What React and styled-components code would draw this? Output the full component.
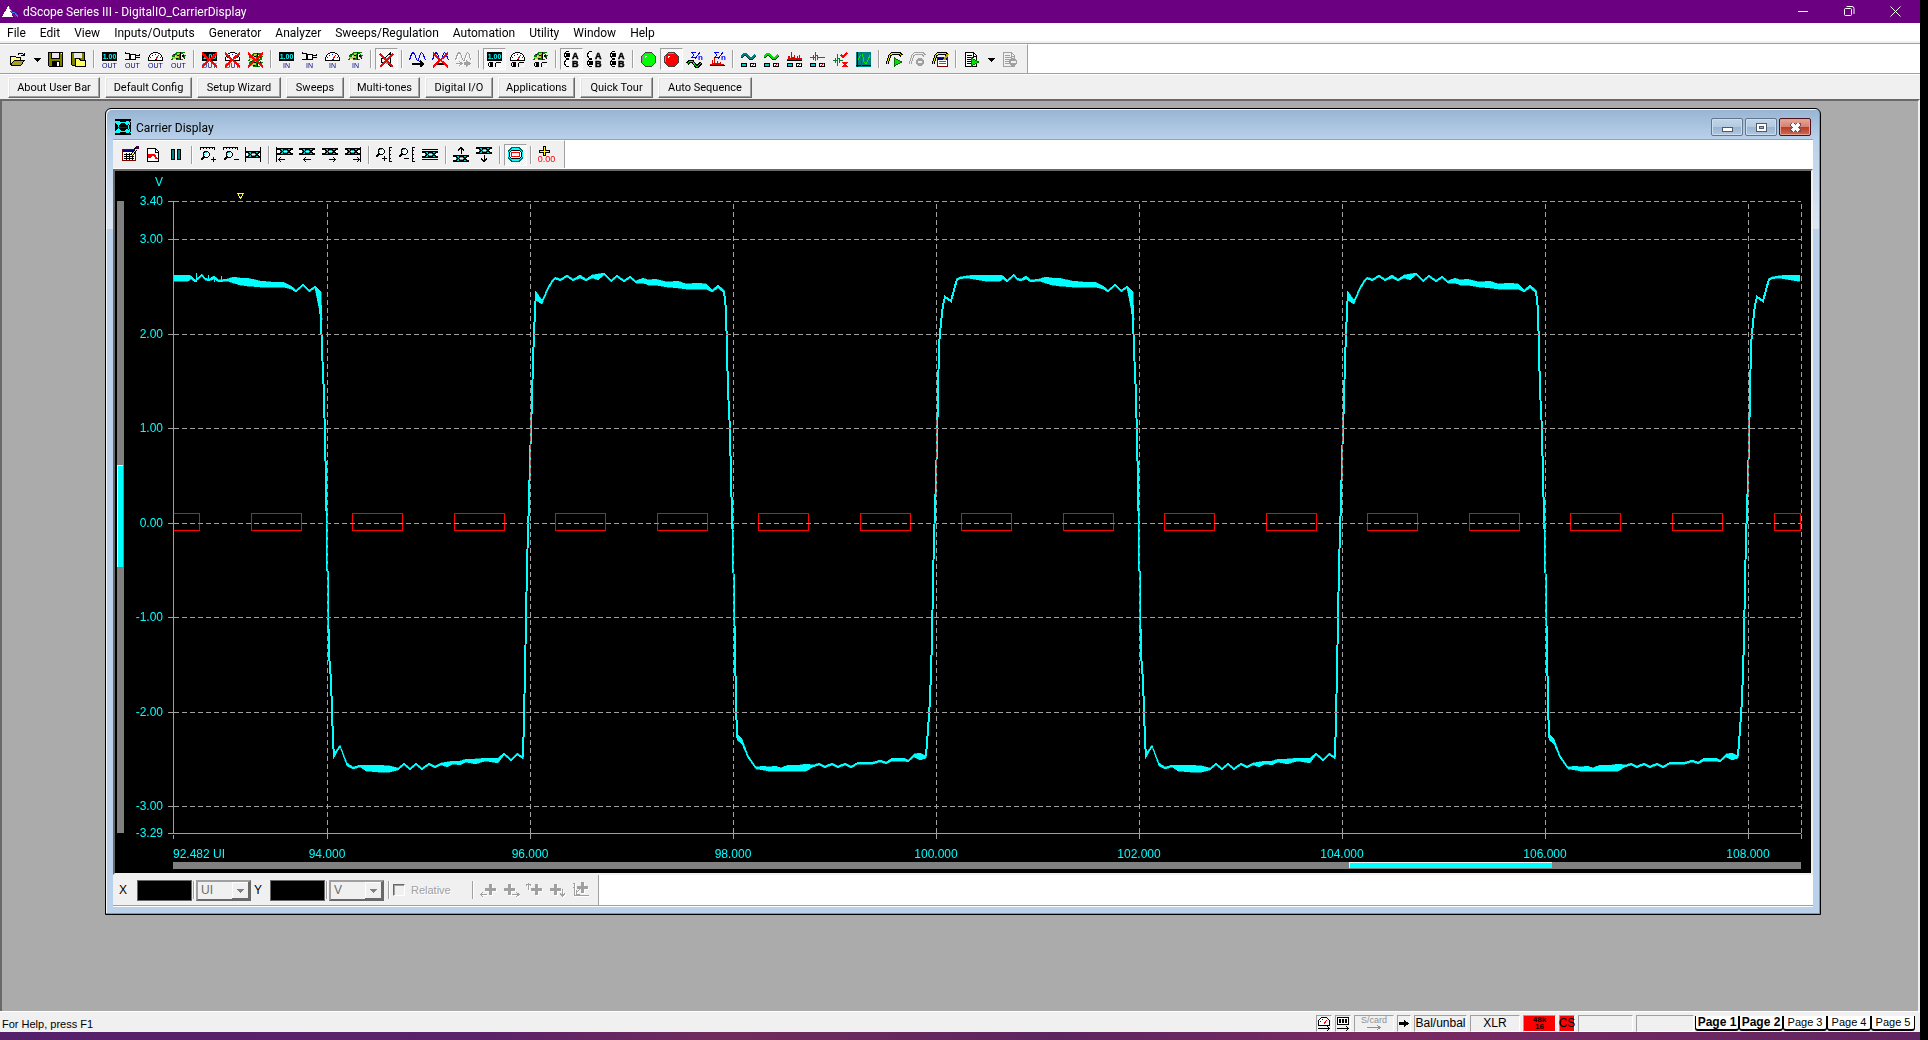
import React from 'react';
import styled, { createGlobalStyle, css } from 'styled-components';

const GlobalStyle = createGlobalStyle`
	html, body, #root {
		height: 100%;
		margin: 0;
	}
	body {
		background: #000;
		font-family: "Liberation Sans", Arial, sans-serif;
		font-size: 12px;
		color: #000;
	}
	*, *::before, *::after {
		box-sizing: border-box;
	}
	button, input, select {
		font: inherit;
		margin: 0;
		padding: 0;
	}
`;

const uiFont = 'Roboto, "Liberation Sans", sans-serif';

/* ---------- main window ---------- */

const Desktop = styled.div`
	height: 100vh;
	min-height: 480px;
	padding-right: 8px;
	display: flex;
	flex-direction: column;
`;

const TitleBar = styled.header`
	height: 23px;
	flex: none;
	display: flex;
	align-items: center;
	padding: 0 2px;
	background: #6b0080;
	color: #fff;
`;

const AppTitle = styled.h1`
	flex: 1;
	margin: 0 0 0 5px;
	padding-top: 1px;
	font-family: ${uiFont};
	font-size: 12px;
	line-height: 16px;
	font-weight: 400;
`;

const CaptionButton = styled.button`
	width: 46px;
	height: 23px;
	border: 0;
	background: none;
	display: flex;
	align-items: center;
	justify-content: center;
`;

const MenuBar = styled.nav`
	height: 20px;
	flex: none;
	display: flex;
	align-items: center;
	padding-top: 2px;
	background: #fff;
	border-bottom: 2px solid #f0f0f0;
	font-family: ${uiFont};
`;

const MenuItem = styled.button`
	border: 0;
	background: none;
	padding: 0 7px;
	line-height: 16px;
	white-space: nowrap;
`;

const ToolRow = styled.div`
	flex: none;
	display: flex;
	background: #fff;
	border-top: 1px solid #a0a0a0;
	border-bottom: 1px solid ${(p) => (p.$open ? '#fff' : '#a0a0a0')};
`;

const Toolbar = styled.div`
	display: flex;
	align-items: center;
	height: ${(p) => p.$height || 29}px;
	padding: 0 6px;
	background: #f0f0f0;
	border-top: 1px solid #fff;
	border-right: 1px solid #a0a0a0;
`;

const ToolButton = styled.button`
	width: ${(p) => (p.$narrow ? 15 : 23)}px;
	height: 22px;
	border: 1px solid transparent;
	background: none;
	display: flex;
	align-items: center;
	justify-content: center;
	${(p) =>
		p.$pressed &&
		css`
			border-color: #a0a0a0 #fff #fff #a0a0a0;
			background: repeating-conic-gradient(#fff 0 25%, #f0f0f0 0 50%) 0 0 / 2px 2px;
		`}
`;

const Separator = styled.span`
	width: 2px;
	height: 18px;
	margin: 0 ${(p) => (p.$tight ? 1 : 3)}px;
	border-left: 1px solid #a0a0a0;
	border-right: 1px solid #fff;
`;

const UserBar = styled.div`
	height: 25px;
	flex: none;
	display: flex;
	align-items: center;
	gap: 5px;
	padding: 0 8px;
	background: #f0f0f0;
	border-top: 1px solid #fff;
`;

const UserButton = styled.button`
	width: ${(p) => p.$width}px;
	height: 21px;
	border: 1px solid;
	border-color: #fff #696969 #696969 #fff;
	box-shadow: inset -1px -1px 0 #a0a0a0, inset 1px 1px 0 #e3e3e3;
	background: #f0f0f0;
	font-family: ${uiFont};
	font-size: 11px;
	white-space: nowrap;
`;

const MdiArea = styled.main`
	flex: 1;
	min-height: 0;
	display: flex;
	padding: 7px 97px 96px 103px;
	background: #ababab;
	border: solid;
	border-width: 2px 2px 0 2px;
	border-color: #696969 #f0f0f0 #fff #696969;
`;

/* ---------- child window ---------- */

const ChildWindow = styled.section`
	flex: 1;
	min-width: 0;
	display: flex;
	flex-direction: column;
	padding: 0 7px 7px;
	border: 1px solid #000;
	border-radius: 6px 6px 0 0;
	box-shadow: inset -1px -1px 0 #35b4d8, inset 1px 1px 0 #f4f8fc;
	background:
		linear-gradient(#98b4d2, #b9d1ea 30px, #dde7f4 120px, transparent 120px),
		#b9d1ea;
`;

const ChildTitle = styled.header`
	height: 30px;
	flex: none;
	display: flex;
	align-items: center;
	gap: 2px;
	padding: 6px 2px 0 2px;
`;

const ChildName = styled.h2`
	flex: 1;
	margin: 0 0 0 3px;
	padding-top: 1px;
	font-family: ${uiFont};
	font-size: 12px;
	line-height: 16px;
	font-weight: 400;
`;

const GlassButton = styled.button`
	width: 32px;
	height: 18px;
	border: 1px solid ${(p) => (p.$close ? '#4c1220' : '#5f7590')};
	border-radius: 2px;
	box-shadow: inset 0 0 0 1px ${(p) => (p.$close ? '#e0a39a' : '#cfdeee')};
	background: ${(p) =>
		p.$close
			? 'linear-gradient(#e6a898, #d9806f 48%, #b93a22 50%, #cf6a52)'
			: 'linear-gradient(#c3d5e8, #b4cae1 48%, #98b4d2 50%, #b0c8e0)'};
	display: flex;
	align-items: center;
	justify-content: center;
`;

const ChildBody = styled.div`
	flex: 1;
	min-height: 0;
	display: flex;
	flex-direction: column;
	background: #fff;
`;

const PlotFrame = styled.div`
	flex: 1;
	min-height: 0;
	background: #000;
	border: 2px solid;
	border-color: #696969 #f0f0f0 #f0f0f0 #696969;
`;

const PlotSvg = styled.svg`
	display: block;
	width: 100%;
	height: 100%;
	font-size: 12px;
`;

const CursorRow = styled.div`
	flex: none;
	display: flex;
	border-bottom: 1px solid #fff;
	box-shadow: inset 0 -1px 0 #a0a0a0;
	background: #fff;
`;

const CursorBar = styled.form`
	display: flex;
	align-items: center;
	height: 30px;
	margin-bottom: 1px;
	padding: 0 6px;
	background: #f0f0f0;
	border-right: 1px solid #a0a0a0;
`;

const CursorLabel = styled.label`
	width: ${(p) => p.$width}px;
	line-height: 20px;
`;

const CursorValue = styled.input`
	width: 55px;
	height: 21px;
	border: 1px solid #696969;
	background: #000;
	color: #0ff;
`;

const UnitBox = styled.span`
	position: relative;
	display: flex;
	width: 55px;
	height: 21px;
	margin-right: 3px;

	svg {
		position: absolute;
		right: 2px;
		top: 2px;
		pointer-events: none;
	}
`;

const UnitSelect = styled.select`
	width: 100%;
	appearance: none;
	border: 2px solid;
	border-color: #a0a0a0 #696969 #696969 #a0a0a0;
	border-radius: 0;
	padding: 0 3px;
	background: #f0f0f0;
	color: #6d6d6d;
	opacity: 1;
`;

const RelativeLabel = styled.label`
	display: flex;
	align-items: center;
	gap: 6px;
	width: 78px;
	padding-left: 2px;
	font-size: 11px;
	color: #a0a0a0;
	text-shadow: 1px 1px 0 #fff;
`;

const RelativeCheck = styled.input`
	appearance: none;
	width: 12px;
	height: 12px;
	background: #f0f0f0;
	border: 1px solid;
	border-color: #696969 #fff #fff #696969;
	box-shadow: inset 1px 1px 0 #a0a0a0;
`;

/* ---------- status bar ---------- */

const StatusBar = styled.footer`
	height: 21px;
	flex: none;
	display: flex;
	align-items: center;
	gap: 3px;
	padding: 2px 5px 0 2px;
	background: #f0f0f0;
	border-top: 1px solid #fff;
	font-size: 11px;
`;

const HelpText = styled.span`
	flex: 1;
	padding-top: 1px;
`;

const StatusPane = styled.span`
	width: ${(p) => p.$width}px;
	height: 17px;
	border: 1px solid;
	border-color: #a0a0a0 #fff #fff #a0a0a0;
	display: flex;
	align-items: center;
	justify-content: center;
	font-size: 12px;
	white-space: nowrap;
	background: ${(p) => (p.$alarm ? '#f00' : '#f0f0f0')};
`;

const RatePane = styled(StatusPane)`
	flex-direction: column;
	font-size: 8px;
	line-height: 7px;
	font-weight: 700;
`;

const SoundCard = styled(StatusPane)`
	flex-direction: column;
	font-size: 9px;
	line-height: 9px;
	color: #909090;
`;

const PageTabs = styled.div`
	display: flex;
	margin-left: -2px;
`;

const PageTab = styled.button`
	width: 44px;
	height: 15px;
	border: 1px solid #000;
	border-width: 0 1px 2px 1px;
	border-radius: 0 0 3px 3px;
	background: #fff;
	font-size: ${(p) => (p.$bold ? 12 : 11)}px;
	font-weight: ${(p) => (p.$bold ? 700 : 400)};
	line-height: 12px;
	white-space: nowrap;
`;

const TaskStrip = styled.div`
	height: 8px;
	flex: none;
	background: linear-gradient(90deg, #55206a, #5a2268 25%, #702c5c 38%, #5c2560 55%, #7a2a62 72%, #5f2560);
`;

/* ---------- icons ---------- */

const Svg = ({ w = 17, h = 17, children }) => (
	<svg width={w} height={h} viewBox={`0 0 ${w} ${h}`} fill="none" shapeRendering="crispEdges" aria-hidden="true">
		{children}
	</svg>
);

const Line = ({ d, c = '#000', w = 1, f = 'none' }) => <path d={d} stroke={c} strokeWidth={w} fill={f} />;
const Fill = ({ d, c = '#000' }) => <path d={d} fill={c} />;

const Caption = ({ children }) => (
	<text x="8.5" y="16.5" fontSize="7" textAnchor="middle" fill="#000080">
		{children}
	</text>
);

const Reading = ({ y = 9 }) => (
	<g>
		<Fill d={`M1 ${y - 8}h15v9H1z`} />
		<text x="8.5" y={y - 1} fontSize="7" textAnchor="middle" fill="#0ff" fontWeight="700">
			1.00
		</text>
	</g>
);

const Plug = () => (
	<g>
		<Line d="M1 2.500h4v6H1M5 4.500h1M6.500 3v5h5v-5zM12 4.500h4M12 6.500h4M1 1v2M15.500 3v1" />
		<Fill d="M7 4h4v3H7z" c="#fff" />
	</g>
);

const Meter = () => (
	<g>
		<Line d="M1.500 9.500V6.500L3.500 3.500L6.500 1.500H10.500L13.500 3.500L15.500 6.500V9.500Z" f="#fff" />
		<Fill d="M3 6h1v1H3zM5 4h1v1H5zM8 3h1v1H8zM13 6h1v1h-1z" c="#00f" />
		<Line d="M8.500 8.500L12 4" c="#f00" />
		<Fill d="M8 8h2v1H8z" c="#00f" />
	</g>
);

const Fish = () => (
	<g>
		<Fill d="M1 5l2-2h2l1-2h9v1h-2l1 2h2l-1 3h-2v2H6l-1-2-3 2H1l2-3z" c="#008000" />
		<Fill d="M2 6h3V4h2V2h3l-1 2v3H7v1H3z" c="#c8c840" />
		<Fill d="M10 3h3v5h-3zM5 5h1v1H5z" c="#f8f8d8" />
		<Fill d="M4 3h1v1H4zM7 4h2v1H7zM6 7h2v1H6zM10 1h1v8h-1zM12 4h2v2h-2zM14 7h1v1h-1z" />
	</g>
);

const Cross = ({ d = 'M1 2L16 16M16 2L1 16' }) => <Line d={d} c="#f00" w={2} />;

const Radios = () => (
	<g>
		<Line d="M2.500 12v3M3 11.500h4M3 15.500h4" />
		<Fill d="M4 12h3v3H4z" />
		<Line d="M10 15.500l-.5-3 2-1.500h3" />
		<Line d="M14.500 12v3l-3 1" c="#fff" />
	</g>
);

const Play = ({ x, y }) => <Line d={`M${x + 0.5} ${y}v8l7-4z`} c="#007000" f="#00e000" />;

const Sheet = ({ c = '#000', bg = '#fff' }) => (
	<g>
		<Line d="M2.500 1.500h8l3 3v11h-11z" c={c} f={bg} />
		<Line d="M4 4.500h5M4 6.500h7M4 8.500h7M4 10.500h7M4 12.500h7" c={c} />
		<Line d="M10.500 1v4H14" c={c} />
	</g>
);

const Sine = ({ c = '#00f' }) => (
	<Line d="M.500 9L2.500 3L4 1.500L5.500 3L8 9H9.500L11 4L12.500 1.500L14 3L16.500 9" c={c} />
);

const Ripple = ({ c, y = 0 }) => <Line d={`M1 ${6 + y}l3-3h2l4 4h2l3-3`} c={c} w={2} />;

const Readouts = () => (
	<g>
		<Line d="M1.500 12.500h5v3h-5z" f="#0cc" />
		<Line d="M10.500 12.500h5v3h-5z" f="#fff" />
		<Line d="M12 15l3-3" c="#f00" />
	</g>
);

const Peaks = () => (
	<Fill d="M1 8h1V5h2v2h1V1h1v5h2V4h1v3h2V5h1v2h1V4h1v3h2v3H1z" c="#e00000" />
);

const AverageMark = () => (
	<g>
		<Line d="M10 1.500H5.500L8 4L5.500 6.500H10M14 1L9 8" c="#00f" />
		<text x="12" y="9" fontSize="8" fontWeight="700" fill="#00f">n</text>
	</g>
);

const Route = ({ a, b }) => (
	<g>
		{[[4, a], [12, b]].map(([y, on]) => (
			<g key={y}>
				<path d={`M6 ${y + 3.5}H3.500L1.500 ${y + 1}v-2L3.500 ${y - 3.5}H6`} stroke="#000" fill="#fff" />
				<path d={`M6 ${y + 3.5}L8 ${y + 1}v-2`} stroke="#fff" />
				{on && <Fill d={`M3 ${y - 2}h4v4H3z`} />}
			</g>
		))}
		<text x="9" y="8" fontSize="9" fontWeight="700" fill="#000" stroke="#000" strokeWidth="0.5">A</text>
		<text x="9" y="16" fontSize="9" fontWeight="700" fill="#000" stroke="#000" strokeWidth="0.5">B</text>
	</g>
);

const Lamp = ({ c }) => (
	<g>
		<path d="M5.500 1.500h6l4 4v6l-4 4h-6l-4-4v-6z" fill={c} stroke="#404040" />
		<Line d="M5 2.500h6M2.500 5v6" c="#909090" />
		<Fill d="M5 5h2v1H5zM5 6h1v1H5z" c="#fff" />
	</g>
);

const Curve = ({ c = '#e8e800', edge = '#000' }) => (
	<g>
		<Line d="M1 13L4 4l3-2h6l3 3" c={edge} w={3} />
		<Line d="M1 13L4 4l3-2h6l3 3" c={c} w={1} />
	</g>
);

// eye pattern strip
const Eye = ({ x = 0, y = 0 }) => (
	<g transform={`translate(${x} ${y})`}>
		<Fill d="M0 0h16v7H0z" c="#0cc" />
		<Line d="M0 .500h16M0 6.500h16" />
		<Fill d="M0 2h2l1 1v1L2 5H0zM16 2h-2l-1 1v1l1 1h2z" c="#fff" />
		<Line d="M0 1.500h3l2 2-2 2H0M7 1.500h3l2 2-2 2H7l-1.500-2zM16 1.500h-2l-2 2 2 2h2" />
		<Fill d="M7 3h3v1H7z" c="#e8ffff" />
	</g>
);

const Lens = ({ x, y }) => (
	<g transform={`translate(${x} ${y})`}>
		<Line d="M3.500 .500h3l2 2v2l-2 2h-3l-1-2v-2z" f="#e8ffff" />
		<Fill d="M4 1h2v1H4zM3 3h1v1H3z" c="#0cc" />
		<Line d="M3 6L0 9" w={2} />
	</g>
);

const Target = () => (
	<g>
		<Fill d="M8 1h3v4h4v3h-4v4H8V8H4V5h4z" c="#fff" />
		<Fill d="M7 0h3v4h4v3h-4v4H7V7H3V4h4z" c="#a0a0a0" />
	</g>
);

const Grey = ({ d }) => (
	<g>
		<g transform="translate(1 1)">
			<Line d={d} c="#fff" />
		</g>
		<Line d={d} c="#a0a0a0" />
	</g>
);

const icons = {
	open: (
		<Svg>
			<Line d="M1.500 14V5.500h5l1 1h4V9M1.500 14.500h10L15.500 9H5.500L2 14" f="#ffff80" />
			<Fill d="M5.500 9.500h9.500l-3.500 4.500H2.500z" c="#a8a020" />
			<Line d="M9 3.500l2-1.500h2l2 2.500M12 4.500h4M15.500 2v3" />
		</Svg>
	),
	drop: (
		<Svg w={8} h={17}>
			<Fill d="M0 7h8L4 11z" />
		</Svg>
	),
	save: (
		<Svg>
			<Line d="M1.500 1.500h14v14h-13l-1-1z" f="#808000" />
			<Fill d="M4 1h9v7H4zM5 10h8v6H5z" />
			<Fill d="M5 2h7v5H5z" c="#e8e8e8" />
			<Fill d="M10 11h2v4h-2zM14 2h1v1h-1z" c="#fff" />
		</Svg>
	),
	saveOpen: (
		<Svg>
			<Line d="M1.500 1.500h13v13h-12l-1-1z" f="#808000" />
			<Fill d="M4 2h8v5H4z" c="#e8e8e8" />
			<Line d="M5.500 15.500v-8h4l1 2h5v6z" f="#ffff60" />
		</Svg>
	),
	readOut: <Svg><Reading /><Caption>OUT</Caption></Svg>,
	plugOut: <Svg><Plug /><Caption>OUT</Caption></Svg>,
	meterOut: <Svg><Meter /><Caption>OUT</Caption></Svg>,
	fishOut: <Svg><Fish /><Caption>OUT</Caption></Svg>,
	readOff: <Svg><Reading /><Caption>OUT</Caption><Cross /></Svg>,
	meterOff: <Svg><Meter /><Caption>OUT</Caption><Cross /></Svg>,
	fishOff: <Svg><g transform="translate(0 1)"><Fish /></g><g transform="translate(0 7)"><Fish /></g><Cross /></Svg>,
	readIn: <Svg><Reading /><Caption>IN</Caption></Svg>,
	plugIn: <Svg><Plug /><Caption>IN</Caption></Svg>,
	meterIn: <Svg><Meter /><Caption>IN</Caption></Svg>,
	fishIn: <Svg><Fish /><Caption>IN</Caption></Svg>,
	mute: (
		<Svg>
			<Line d="M3.500 7v4h4l5 4V2L7 7z" f="#f0f0f0" />
			<Fill d="M8 7h2v6H8z" c="#a0a0a0" />
			<Cross d="M2 3L15 16M15 3L2 16" />
		</Svg>
	),
	waveRun: <Svg><Sine /><Line d="M3 13h11M11 10l3 3-3 3" w={2} /></Svg>,
	waveStop: <Svg><Sine /><Line d="M3 13h11" w={2} /><Cross /></Svg>,
	waveStep: (
		<Svg>
			<Grey d="M.500 9L2.500 3L4 1.500L5.500 3L8 9H9.500L11 4L12.500 1.500L14 3L15.500 9M1 12.500h6M4 10l3 2.500-3 2.500" />
			<Fill d="M9 11h2V9l5 3.500-5 3.500v-2H9z" c="#a0a0a0" />
		</Svg>
	),
	readSel: <Svg><Reading /><Radios /></Svg>,
	meterSel: <Svg><Meter /><Radios /></Svg>,
	fishSel: <Svg><Fish /><Radios /></Svg>,
	routeA: <Svg><Route a /></Svg>,
	routeB: <Svg><Route b /></Svg>,
	routeAB: <Svg><Route a b /></Svg>,
	lampGreen: <Svg><Lamp c="#0f0" /></Svg>,
	lampRed: <Svg><Lamp c="#f00" /></Svg>,
	avgWave: <Svg><Line d="M1 13l3-3h2l4 5h2l3-3" w={3} /><Line d="M1 13l3-3h2l4 5h2l3-3" c="#0e0" /><AverageMark /></Svg>,
	avgPeak: <Svg><Fill d="M1 13h2V9h1v3h1V7h1v5h2v-2h1v2h2v-1h1v2h3v1H1z" c="#e00000" /><Line d="M1 14.500h15" /><AverageMark /></Svg>,
	scope: <Svg><Ripple c="#003040" y={1} /><Ripple c="#008080" /><Readouts /></Svg>,
	scopeGreen: <Svg><Ripple c="#003000" y={1} /><Ripple c="#00e000" /><Readouts /></Svg>,
	fft: <Svg><Peaks /><Line d="M1 9.500h15" /><Readouts /></Svg>,
	impulse: <Svg><Line d="M1 6.500h3V4v5V6.500h2V1v9V4h2v5V6.500h8" c="#008030" /><Readouts /></Svg>,
	limits: (
		<Svg>
			<Line d="M1 9.500h2V7v5V9.500h2V3v12V7h2v5V9.500h4" c="#008030" />
			<Line d="M9 4l2 2 4-4M11 11l4 5M15 11l-4 5" c="#f00" w={2} />
		</Svg>
	),
	trace: (
		<Svg>
			<Fill d="M1 1h15v15H1z" c="#008080" />
			<Line d="M2.500 1v15M1 14.500h15" />
			<Line d="M3 9l2-4 2-2 1 3 1 5 2 2 2-4 2-5" c="#0e0" />
			<Line d="M6.500 1v14" c="#f00" />
		</Svg>
	),
	sweepRun: <Svg><Curve /><Play x={8} y={7} /></Svg>,
	sweepStop: (
		<Svg>
			<Curve c="#f0f0f0" edge="#a0a0a0" />
			<circle cx="11" cy="11" r="4" fill="#a0a0a0" />
			<Fill d="M9 10h4v2H9z" c="#f0f0f0" />
		</Svg>
	),
	sweepSetup: (
		<Svg>
			<Curve />
			<Line d="M5.500 6.500h10v9h-10z" c="#800000" f="#fff" />
			<Fill d="M6 7h9v2H6z" c="#000080" />
			<Line d="M7 10.500h7M7 12.500h7" c="#606060" />
			<Line d="M16 3l-4 6" w={2} c="#c0a000" />
		</Svg>
	),
	scriptRun: <Svg><Sheet /><Play x={8} y={7} /></Svg>,
	scriptStop: (
		<Svg>
			<Sheet c="#a0a0a0" bg="#f0f0f0" />
			<circle cx="12" cy="11" r="4" fill="#a0a0a0" />
			<Fill d="M10 10h5v2h-5z" c="#f0f0f0" />
		</Svg>
	),
	setup: (
		<Svg>
			<Line d="M.500 3.500h13v11H.500z" c="#800000" f="#fff" />
			<Fill d="M1 4h12v2H1z" c="#000080" />
			<Line d="M2 8.500h10M2 10.500h10M2 12.500h10M4.500 7v7M7.500 7v7M10.500 7v7" />
			<Line d="M15 1l-5 8" w={3} />
			<Line d="M15 2l-5 7" c="#ffff00" w={1} />
			<Fill d="M14 0h3v3h-3z" c="#400040" />
		</Svg>
	),
	undo: (
		<Svg>
			<Line d="M2.500 2.500h8l3 3v10h-11z" f="#fff" />
			<Line d="M10.500 2v4H14" />
			<Line d="M4 12v-3h3M4 12l3-3h2l3 4" c="#f00" w={2} />
		</Svg>
	),
	pause: <Svg><Line d="M3.500 3.500h3v10h-3zM9.500 3.500h3v10h-3z" f="#008080" /></Svg>,
	zoomInX: <Svg><Line d="M1 1.500h15M1.500 1v3M4.500 1v2M7.500 1v2M10.500 1v2M13.500 1v2M15.500 1v3M12 13.500h5M14.500 11v5" /><Lens x={2} y={5} /></Svg>,
	zoomOutX: <Svg><Line d="M1 1.500h15M1.500 1v3M4.500 1v2M7.500 1v2M10.500 1v2M13.500 1v2M15.500 1v3M12 13.500h5" /><Lens x={2} y={5} /></Svg>,
	fitX: <Svg><Eye y={5} /><Line d="M.500 1v15M15.500 1v15" /></Svg>,
	goStart: <Svg><Eye y={2} x={1} /><Line d="M.500 1v15M3 13.500h6M5 11l-2 2.500 2 2.500" /></Svg>,
	goLeft: <Svg><Eye y={2} /><Line d="M5 13.500h7M7 11l-2 2.500 2 2.500" /></Svg>,
	goRight: <Svg><Eye y={2} /><Line d="M7 13.500h7M11 11l2 2.500-2 2.500" /></Svg>,
	goEnd: <Svg><Eye y={2} x={-1} /><Line d="M15.500 1v15M8 13.500h6M12 11l2 2.500-2 2.500" /></Svg>,
	zoomInY: <Svg><Line d="M13.500 1.500v14M13 1.500h3M13 4.500h2M13 8.500h2M13 12.500h2M13 15.500h3M6 12.500h5M8.500 10v5" /><Lens x={0} y={2} /></Svg>,
	zoomOutY: <Svg><Line d="M13.500 1.500v14M13 1.500h3M13 4.500h2M13 8.500h2M13 12.500h2M13 15.500h3M5 12.500h5" /><Lens x={0} y={2} /></Svg>,
	fitY: <Svg><Line d="M0 3.500h16M0 13.500h16" /><Eye y={5} /></Svg>,
	goUp: <Svg><Line d="M8.500 1v7M5 4.500l3-3 3 3" /><Eye y={9} /></Svg>,
	goDown: <Svg><Line d="M8.500 9v7M5 12.500l3 3 3-3" /><Eye y={1} /></Svg>,
	mask: (
		<Svg>
			<Fill d="M5 2h7l4 4v5l-4 4H5l-4-4V6z" c="#0ff" />
			<Line d="M1 5.500l4-4h7l4 4M1 11.500l4 4h7l4-4" c="#006060" />
			<Line d="M4.500 4.500h8l2 2v4l-2 2h-8l-2-2v-4z" f="#fff" />
			<Line d="M4.500 6.500h8v4h-8z" c="#f00" />
		</Svg>
	),
	zeroCursor: (
		<Svg>
			<Line d="M6.500 0v10M1 5.500h11" w={3} />
			<Line d="M6.500 1v8M2 5.500h9" c="#ff0" />
			<text x="8.5" y="16" fontSize="9" textAnchor="middle" fill="#f00">0.00</text>
		</Svg>
	),
	curLeft: <Svg><g transform="translate(2 2)"><Target /></g><Grey d="M1 12.500h6M3 10l-2 2.500 2 2.500" /></Svg>,
	curRight: <Svg><g transform="translate(-2 2)"><Target /></g><Grey d="M9 12.500h7M13 10l3 2.500-3 2.500" /></Svg>,
	curUp: <Svg><g transform="translate(2 2)"><Target /></g><Grey d="M2.500 1v7M0 3.500l2.500-2 2.500 2" /></Svg>,
	curDown: <Svg><g transform="translate(-2 2)"><Target /></g><Grey d="M13.500 7v7M11 11.500l2.500 2.500 2.500-2.500" /></Svg>,
	curHome: <Svg><g transform="translate(2 0)"><Target /></g><Grey d="M2.500 1v12.500h14M1 1.500h2M1 5.500h2M4 11l4-4M4 8v4h4" /></Svg>,
};

/* ---------- toolbar contents ---------- */

const menus = [
	'File', 'Edit', 'View', 'Inputs/Outputs', 'Generator', 'Analyzer',
	'Sweeps/Regulation', 'Automation', 'Utility', 'Window', 'Help',
];

// '|' is a separator, a leading '*' is a pressed button
const mainTools = [
	'open', 'drop', 'save', 'saveOpen', '|',
	'readOut', 'plugOut', 'meterOut', 'fishOut', '|',
	'readOff', 'meterOff', 'fishOff', '|',
	'readIn', 'plugIn', 'meterIn', 'fishIn', '|',
	'*mute', '|',
	'waveRun', 'waveStop', 'waveStep', '|',
	'*readSel', 'meterSel', 'fishSel', '|',
	'*routeA', 'routeB', 'routeAB', '|',
	'lampGreen', '*lampRed', 'avgWave', 'avgPeak', '|',
	'scope', 'scopeGreen', 'fft', 'impulse', 'limits', 'trace', '|',
	'sweepRun', 'sweepStop', 'sweepSetup', '|',
	'scriptRun', 'drop', 'scriptStop',
];

const carrierTools = [
	'setup', 'undo', 'pause', '|',
	'zoomInX', 'zoomOutX', 'fitX', '|',
	'goStart', 'goLeft', 'goRight', 'goEnd', '|',
	'zoomInY', 'zoomOutY', 'fitY', '|',
	'goUp', 'goDown', '|',
	'*mask', '|',
	'zeroCursor',
];

const cursorTools = ['curLeft', 'curRight', 'curUp', 'curDown', 'curHome'];

const userButtons = [
	['About User Bar', 92], ['Default Config', 87], ['Setup Wizard', 84],
	['Sweeps', 58], ['Multi-tones', 71], ['Digital I/O', 68],
	['Applications', 77], ['Quick Tour', 73], ['Auto Sequence', 94],
];

const Tools = ({ items }) =>
	items.map((item, i) => {
		if (item === '|') return <Separator key={i} />;
		const name = item.replace('*', '');
		return (
			<ToolButton key={i} type="button" aria-label={name} $pressed={item[0] === '*'} $narrow={name === 'drop'}>
				{icons[name]}
			</ToolButton>
		);
	});

/* ---------- carrier plot ---------- */

const rows = [
	['3.40', 201], ['3.00', 239], ['2.00', 334], ['1.00', 428], ['0.00', 523],
	['-1.00', 617], ['-2.00', 712], ['-3.00', 806], ['-3.29', 833],
];

const columns = [
	['94.000', 327], ['96.000', 530], ['98.000', 733], ['100.000', 936],
	['102.000', 1139], ['104.000', 1342], ['106.000', 1545], ['108.000', 1748],
];

// the trace repeats every four unit intervals: [x, top, bottom]
const PERIOD = 812;
const bands = [
	[
		[144, 279, 281], [148, 277, 279], [154, 276, 278], [161, 275, 279], [173, 275, 281], [188, 275, 281],
		[191, 276, 279], [195, 280, 282], [202, 274, 276], [205, 278, 280], [209, 279, 281], [214, 276, 279],
		[219, 280, 282], [227, 279, 281], [233, 277, 283], [240, 278, 285], [247, 278, 286], [260, 281, 287],
		[271, 282, 287], [283, 282, 287], [291, 286, 289], [296, 290, 292], [303, 284, 286], [309, 290, 292],
		[315, 286, 288], [321, 292, 318], [322, 318, 320],
	],
	[
		[333, 755, 759], [340, 745, 747], [347, 763, 766], [353, 767, 769], [360, 765, 767], [366, 765, 771],
		[378, 765, 772], [390, 766, 772], [398, 768, 770], [404, 763, 765], [410, 768, 770], [416, 763, 765],
		[422, 768, 770], [429, 763, 765], [435, 766, 768], [441, 763, 765], [447, 762, 767], [453, 761, 764],
		[460, 761, 765], [466, 759, 762], [475, 759, 764], [486, 758, 761], [498, 758, 763], [504, 753, 755],
		[511, 759, 761], [517, 753, 755], [523, 757, 759],
	],
	[
		[535, 291, 300], [537, 293, 301], [542, 300, 304], [548, 287, 290], [552, 280, 283], [555, 277, 279],
		[560, 279, 281], [567, 275, 277], [573, 279, 281], [580, 275, 278], [586, 279, 281], [592, 275, 278],
		[598, 274, 280], [604, 273, 275], [611, 280, 282], [617, 275, 277], [624, 280, 282], [630, 276, 278],
		[636, 281, 283], [643, 278, 283], [648, 280, 285], [655, 279, 285], [667, 282, 287], [678, 281, 288],
		[686, 284, 289], [697, 283, 289], [706, 284, 289], [712, 290, 292], [718, 285, 288], [724, 290, 293],
	],
	[
		[737, 734, 740], [742, 739, 744], [748, 755, 758], [756, 767, 769], [763, 766, 770], [768, 767, 771],
		[775, 766, 771], [781, 768, 771], [788, 765, 771], [800, 765, 771], [806, 764, 771], [813, 765, 767],
		[819, 763, 765], [825, 766, 768], [832, 763, 765], [838, 766, 768], [845, 763, 765], [851, 766, 768],
		[858, 762, 764], [873, 762, 764], [880, 760, 762], [886, 762, 764], [892, 758, 761], [904, 758, 761],
		[908, 760, 762], [914, 754, 757], [920, 753, 760], [926, 756, 758],
	],
];

const edges = [
	'M122 540L124 480L125 440L126 395L127 345L129 322L131 305L133 297L139 301L145 279',
	'M317 288L321 317L322 350L324 395L325 440L326 480L327 540L328 600L329 655L331 680L333 740L334 757',
	'M523 757L524 718L525 670L526 620L527 565L529 500L530 460L532 400L533 360L535 310L536 292',
	'M724 291L726 310L727 350L728 390L730 430L731 480L733 545L734 600L735 650L736 700L737 738',
	'M926 756L928 730L930 700L932 640L933 580L934 540',
];

const bandPath = (points) =>
	'M' + points.map(([x, top]) => `${x} ${top}`).join('L') +
	'L' + [...points].reverse().map(([x, , bottom]) => `${x} ${bottom}`).join('L') + 'Z';

const Trace = ({ shift }) => (
	<g transform={`translate(${shift} 0)`}>
		{bands.map((points, i) => (
			<path key={i} d={bandPath(points)} fill="#0ff" stroke="#0ff" strokeWidth="0.500" />
		))}
		{edges.map((d) => (
			<path key={d} d={d} fill="none" stroke="#0ff" strokeWidth="2" />
		))}
	</g>
);

const windows = [];
for (let x = 251; x < 1750; x += 101.5) windows.push(Math.floor(x));

const Plot = () => (
	<PlotSvg viewBox="115 171 1696 702" role="img" aria-label="Carrier Display">
		<defs>
			<clipPath id="plot-area">
				<path d="M174 202h1626v631H174z" />
			</clipPath>
		</defs>
		<g shapeRendering="crispEdges">
			<g clipPath="url(#plot-area)">
				<Trace shift={0} />
				<Trace shift={PERIOD} />
				<Trace shift={PERIOD * 2} />
				<path d="M196.500 273v9M208.500 275v6M214.500 276v6M221.500 276v5" stroke="#0ff" />
			</g>
			<g fill="none" stroke="#f00">
				<path d="M173 513.500h26.500v17H173" />
				{windows.map((x) => (
					<rect key={x} x={x + 0.5} y="513.500" width="50" height="17" />
				))}
				<rect x="1774.500" y="513.500" width="26" height="17" />
			</g>
			<g stroke="#a0a0a0" style={{ mixBlendMode: 'difference' }}>
				{rows.slice(0, -1).map(([label, y]) => (
					<path key={label} d={`M174 ${y + 0.5}H1801`} strokeDasharray="5 3" />
				))}
				{[...columns, ['end', 1801]].map(([label, x]) => (
					<path key={label} d={`M${x + 0.5} 204V833M${x + 0.5} 834v5`} strokeDasharray="5 3" />
				))}
				{rows.map(([label, y]) => (
					<path key={label} d={`M168 ${y + 0.5}h5`} />
				))}
				<path d="M173.500 201V833M173.500 835v4M173 833.500H1801" />
			</g>
			<path d="M237.500 193.500h6l-3 5z" fill="none" stroke="#ff0" />

			<path d="M117 201h7v632h-7zM173 862h1628v7H173z" fill="#808080" />
			<path d="M118 466h5v101h-5zM1350 863h202v5h-202z" fill="#0ff" />
			<path d="M117.500 567V465.500H123M1349.500 868v-5.500H1552" fill="none" stroke="#f0f0f0" />
		</g>
		<g fill="#0ff">
			<text x="163" y="186" textAnchor="end">V</text>
			{rows.map(([label, y]) => (
				<text key={label} x="163" y={y + 4} textAnchor="end">{label}</text>
			))}
			<text x="173" y="858">92.482 UI</text>
			{columns.map(([label, x]) => (
				<text key={label} x={x} y="858" textAnchor="middle">{label}</text>
			))}
		</g>
	</PlotSvg>
);

const Unit = ({ label, value }) => (
	<UnitBox>
		<UnitSelect aria-label={label} disabled defaultValue={value}>
			<option>{value}</option>
		</UnitSelect>
		<svg width="17" height="17" viewBox="0 0 17 17" shapeRendering="crispEdges" aria-hidden="true">
			<path d="M0 0h17v17H0z" fill="#f0f0f0" />
			<path d="M.500 16V.500H16" fill="none" stroke="#fff" />
			<path d="M0 16.500h16.500V0" fill="none" stroke="#696969" />
			<path d="M5 7h7l-3.500 4z" fill="#808080" />
		</svg>
	</UnitBox>
);

const CarrierDisplay = () => (
	<ChildWindow>
		<ChildTitle>
			<Svg w={16} h={16}>
				<Fill d="M0 0h16v16H0z" />
				<Fill d="M0 2h4l2 1h4l2-1h2v2l-2 3v2l2 3v2h-2l-2-1H6l-2 1H0v-2l3-3V7L0 4z" c="#0ff" />
				<Fill d="M6 4h4l2 3v2l-2 3H6L4 9V7z" />
				<Line d="M15.500 2l-2 5v2l2 5" c="#0ff" />
				<Line d="M3 8.500h9" c="#800000" />
			</Svg>
			<ChildName>Carrier Display</ChildName>
			<GlassButton type="button" aria-label="Minimize">
				<Svg w={11} h={10}><Line d="M.500 5.500h10v4H.500z" c="#50586a" f="#fff" /></Svg>
			</GlassButton>
			<GlassButton type="button" aria-label="Maximize">
				<Svg w={11} h={9}>
					<Line d="M.500 .500h10v8H.500z" c="#50586a" f="#fff" />
					<Line d="M3.500 3.500h4v2h-4z" c="#50586a" f="#98b4d2" />
				</Svg>
			</GlassButton>
			<GlassButton type="button" aria-label="Close" $close>
				<Svg w={11} h={9}>
					<Line d="M1 0l9 9M10 0L1 9" c="#50586a" w={5} />
					<Line d="M2 1l7 7M9 1L2 8" c="#fff" w={3} />
				</Svg>
			</GlassButton>
		</ChildTitle>
		<ChildBody>
			<ToolRow $open>
				<Toolbar $height={28}>
					<Tools items={carrierTools} />
				</Toolbar>
			</ToolRow>
			<PlotFrame>
				<Plot />
			</PlotFrame>
			<CursorRow>
				<CursorBar>
					<CursorLabel htmlFor="cursor-x" $width={18}>X</CursorLabel>
					<CursorValue id="cursor-x" disabled />
					<Separator $tight />
					<Unit label="X unit" value="UI" />
					<CursorLabel htmlFor="cursor-y" $width={16}>Y</CursorLabel>
					<CursorValue id="cursor-y" disabled />
					<Separator $tight />
					<Unit label="Y unit" value="V" />
					<Separator $tight />
					<RelativeLabel>
						<RelativeCheck type="checkbox" disabled />
						Relative
					</RelativeLabel>
					<Separator />
					<Tools items={cursorTools} />
				</CursorBar>
			</CursorRow>
		</ChildBody>
	</ChildWindow>
);

class App extends React.Component {
	constructor(props) {
		super(props);

		this.state = {
			page: 0,
		};
	}

	render() {
		const { page } = this.state;

		return (
			<Desktop>
				<GlobalStyle />
				<TitleBar>
					<Svg w={16} h={12}>
						<Fill d="M0 11L6 0h1l4 11z" c="#fff" />
						<Line d="M7 1l3 5 3 1 3 4" c="#4080ff" />
						<Line d="M8 5l3 3 3 3" c="#f00" />
					</Svg>
					<AppTitle>dScope Series III - DigitalIO_CarrierDisplay</AppTitle>
					<CaptionButton type="button" aria-label="Minimize">
						<Svg w={10} h={10}><Line d="M0 4.500h10" c="#fff" /></Svg>
					</CaptionButton>
					<CaptionButton type="button" aria-label="Restore">
						<svg width="11" height="11" fill="none" stroke="#fff" aria-hidden="true">
							<rect x="0.500" y="2.500" width="7" height="7" rx="1" />
							<path d="M2.500 .500h5.500q2 0 2 2v5.500" />
						</svg>
					</CaptionButton>
					<CaptionButton type="button" aria-label="Close">
						<svg width="11" height="11" fill="none" stroke="#fff" aria-hidden="true">
							<path d="M.500 .500l10 10M10.500 .500l-10 10" />
						</svg>
					</CaptionButton>
				</TitleBar>
				<MenuBar>
					{menus.map((name) => (
						<MenuItem key={name} type="button">{name}</MenuItem>
					))}
				</MenuBar>
				<ToolRow>
					<Toolbar>
						<Tools items={mainTools} />
					</Toolbar>
				</ToolRow>
				<UserBar>
					{userButtons.map(([name, width]) => (
						<UserButton key={name} type="button" $width={width}>{name}</UserButton>
					))}
				</UserBar>
				<MdiArea>
					<CarrierDisplay />
				</MdiArea>
				<StatusBar>
					<HelpText>For Help, press F1</HelpText>
					<StatusPane $width={16}>
						<Svg w={14} h={15}>
							<Line d="M1.500 9.500V4.500l3-3h5l3 3v5z" f="#fff" />
							<Line d="M7 8l3-4" c="#f00" />
							<Fill d="M3 5h1v1H3zM5 3h1v1H5z" c="#00f" />
							<Line d="M1 12.500h11M10 10l2 2.500-2 2.500" />
						</Svg>
					</StatusPane>
					<StatusPane $width={16}>
						<Svg w={14} h={15}>
							<Line d="M1.500 1.500h11v7h-11z" f="#fff" />
							<Line d="M3.500 3v4M6.500 3v4M9.500 3v4" w={2} />
							<Line d="M1 12.500h11M10 10l2 2.500-2 2.500" />
						</Svg>
					</StatusPane>
					<SoundCard $width={40}>
						S/card
						<Svg w={14} h={5}><Line d="M0 2.500h13M10 0l3 2.500-3 2.500" c="#909090" /></Svg>
					</SoundCard>
					<StatusPane $width={14}>
						<Svg w={10} h={9}><Fill d="M0 3h5V1l5 3.500L5 8V6H0z" /></Svg>
					</StatusPane>
					<StatusPane $width={53}>Bal/unbal</StatusPane>
					<StatusPane $width={50}>XLR</StatusPane>
					<RatePane $width={33} $alarm>
						<span>48k</span>
						<span>16</span>
					</RatePane>
					<StatusPane $width={16} $alarm>CS</StatusPane>
					<StatusPane $width={55} />
					<StatusPane $width={58} />
					<PageTabs>
						{[1, 2, 3, 4, 5].map((n, i) => (
							<PageTab
								key={n}
								type="button"
								aria-pressed={page === i}
								$bold={n < 3}
								onClick={() => this.setState({ page: i })}
							>
								Page {n}
							</PageTab>
						))}
					</PageTabs>
				</StatusBar>
				<TaskStrip />
			</Desktop>
		);
	}
}

export default App;
